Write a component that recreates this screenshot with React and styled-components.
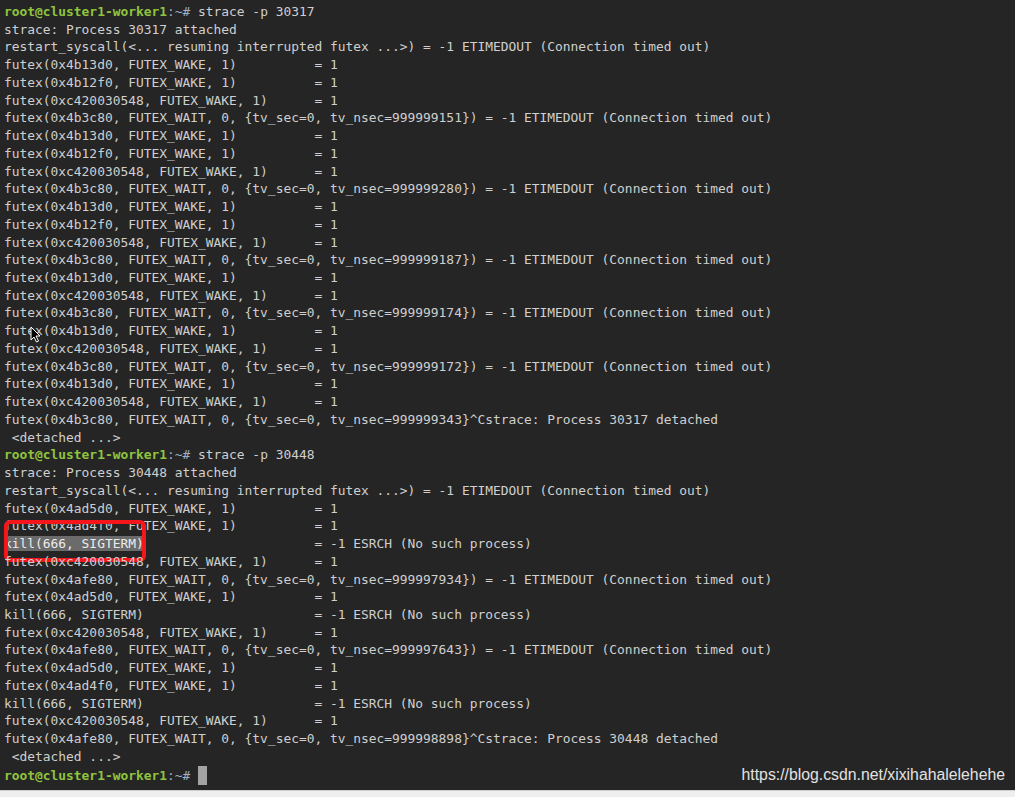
import React from "react";
import styled, { createGlobalStyle } from "styled-components";

const GlobalStyle = createGlobalStyle`
  html, body { margin: 0; padding: 0; background: #252525; }
  body { overflow: hidden; }
`;

const Window = styled.div`
  position: relative;
  width: 1015px;
  height: 797px;
  display: flex;
  flex-direction: column;
  background: #252525;
`;

const Screen = styled.div`
  flex: 1;
  padding: 3px 0 0 4px;
  font-family: "DejaVu Sans Mono", "Liberation Mono", monospace;
  font-size: 12.9px;
  line-height: 17.74px;
  color: #cfcfcf;
  -webkit-font-smoothing: antialiased;
`;

const Line = styled.div`
  position: relative;
  white-space: pre;
  height: 17.74px;
`;

const User = styled.span`
  color: #8fc43f;
  font-weight: bold;
`;

const Path = styled.span`
  color: #9fb0c4;
`;

const Selected = styled.span`
  background: #6b6b6b;
  color: #ececec;
`;

const RedBox = styled.div`
  position: absolute;
  left: 0;
  top: -15px;
  width: 142px;
  height: 42px;
  box-sizing: border-box;
  border: 4px solid #f5161b;
  border-radius: 6px;
`;

const Cursor = styled.span`
  display: inline-block;
  width: 9px;
  height: 19px;
  background: #a3a3a3;
  vertical-align: -5px;
`;

const Pointer = styled.svg`
  position: absolute;
  left: 26px;
  top: 4px;
  width: 11px;
  height: 17px;
`;

const Watermark = styled.div`
  position: absolute;
  right: 10px;
  bottom: 13px;
  font-family: "Liberation Sans", Arial, sans-serif;
  font-size: 15.8px;
  color: #e2e2e2;
`;

const BottomStrip = styled.div`
  height: 6px;
  background: #eeeeee;
  border-top: 1px solid #cfcfcf;
`;

const wake = (addr) => `futex(${addr}, FUTEX_WAKE, 1)`.padEnd(40) + "= 1";
const wait = (addr, ns) =>
  `futex(${addr}, FUTEX_WAIT, 0, {tv_sec=0, tv_nsec=${ns}}) = -1 ETIMEDOUT (Connection timed out)`;
const restart =
  "restart_syscall(<... resuming interrupted futex ...>) = -1 ETIMEDOUT (Connection timed out)";
const killTail = "".padEnd(22) + "= -1 ESRCH (No such process)";
const killLine = "kill(666, SIGTERM)" + killTail;

const lines = [
  { t: "prompt", cmd: "strace -p 30317" },
  "strace: Process 30317 attached",
  restart,
  wake("0x4b13d0"),
  wake("0x4b12f0"),
  wake("0xc420030548"),
  wait("0x4b3c80", "999999151"),
  wake("0x4b13d0"),
  wake("0x4b12f0"),
  wake("0xc420030548"),
  wait("0x4b3c80", "999999280"),
  wake("0x4b13d0"),
  wake("0x4b12f0"),
  wake("0xc420030548"),
  wait("0x4b3c80", "999999187"),
  wake("0x4b13d0"),
  wake("0xc420030548"),
  wait("0x4b3c80", "999999174"),
  { t: "mouse", text: wake("0x4b13d0") },
  wake("0xc420030548"),
  wait("0x4b3c80", "999999172"),
  wake("0x4b13d0"),
  wake("0xc420030548"),
  "futex(0x4b3c80, FUTEX_WAIT, 0, {tv_sec=0, tv_nsec=999999343}^Cstrace: Process 30317 detached",
  " <detached ...>",
  { t: "prompt", cmd: "strace -p 30448" },
  "strace: Process 30448 attached",
  restart,
  wake("0x4ad5d0"),
  wake("0x4ad4f0"),
  { t: "selected" },
  wake("0xc420030548"),
  wait("0x4afe80", "999997934"),
  wake("0x4ad5d0"),
  killLine,
  wake("0xc420030548"),
  wait("0x4afe80", "999997643"),
  wake("0x4ad5d0"),
  wake("0x4ad4f0"),
  killLine,
  wake("0xc420030548"),
  "futex(0x4afe80, FUTEX_WAIT, 0, {tv_sec=0, tv_nsec=999998898}^Cstrace: Process 30448 detached",
  " <detached ...>",
  { t: "prompt", cmd: "", cursor: true },
];

function Prompt({ cmd, cursor }) {
  return (
    <>
      <User>root@cluster1-worker1</User>
      <Path>:~#</Path>
      {" " + cmd}
      {cursor && <Cursor />}
    </>
  );
}

function renderLine(l, i) {
  if (typeof l === "string") return <Line key={i}>{l}</Line>;
  if (l.t === "prompt")
    return (
      <Line key={i}>
        <Prompt cmd={l.cmd} cursor={l.cursor} />
      </Line>
    );
  if (l.t === "selected")
    return (
      <Line key={i}>
        <Selected>kill(666, SIGTERM)</Selected>
        {killTail}
        <RedBox />
      </Line>
    );
  if (l.t === "mouse")
    return (
      <Line key={i}>
        {l.text}
        <Pointer viewBox="0 0 11 17">
          <path
            d="M1 1 L1 14 L4 11 L6.5 16 L8.5 15 L6 10 L10 10 Z"
            fill="#000"
            stroke="#fff"
            strokeWidth="1"
            strokeLinejoin="round"
          />
        </Pointer>
      </Line>
    );
  return null;
}

export default function App() {
  return (
    <>
      <GlobalStyle />
      <Window>
        <Screen>{lines.map(renderLine)}</Screen>
        <BottomStrip />
        <Watermark>https://blog.csdn.net/xixihahalelehehe</Watermark>
      </Window>
    </>
  );
}
